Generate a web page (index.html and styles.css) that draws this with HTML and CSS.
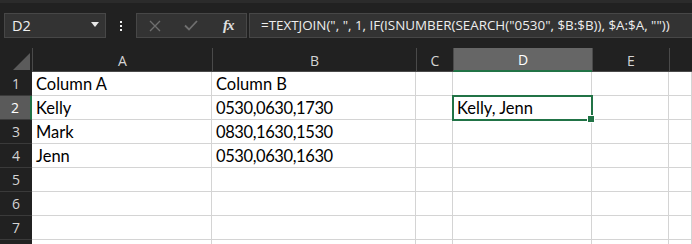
FILE: index.html
```html
<!DOCTYPE html>
<html>
<head>
<meta charset="utf-8">
<link rel="stylesheet" href="styles.css">
</head>
<body>
<div class="app">
  <div class="topstrip"></div>
  <div class="toolbar">
    <div class="namebox">
      <span class="nb-text">D2</span>
      <svg class="nb-caret" width="8" height="5" viewBox="0 0 8 5"><path d="M0 0H8L4 5Z" fill="#e8e8e8"/></svg>
    </div>
    <div class="dots"><i></i><i></i><i></i></div>
    <div class="btnbox">
      <svg class="ic ic-x" width="12" height="12" viewBox="0 0 12 12"><path d="M1 1L11 11M11 1L1 11" stroke="#6f6f6f" stroke-width="1.4"/></svg>
      <svg class="ic ic-check" width="14" height="11" viewBox="0 0 14 11"><path d="M1 5.5L5 9.5L13 1" stroke="#6f6f6f" stroke-width="1.8" fill="none"/></svg>
      <span class="fx">fx</span>
    </div>
    <div class="formula">=TEXTJOIN(", ", 1, IF(ISNUMBER(SEARCH("0530", $B:$B)), $A:$A, ""))</div>
  </div>
  <div class="sheet">
    <div class="hdr corner"><svg width="17" height="17" viewBox="0 0 17 17"><path d="M17 0V17H0Z" fill="#5b5b5b"/></svg></div>
    <div class="hdr col">A</div>
    <div class="hdr col">B</div>
    <div class="hdr col">C</div>
    <div class="hdr col sel">D</div>
    <div class="hdr col">E</div>
    <div class="hdr col last"></div>

    <div class="hdr row">1</div>
    <div class="cell">Column A</div><div class="cell">Column B</div><div class="cell"></div><div class="cell"></div><div class="cell"></div><div class="cell"></div>

    <div class="hdr row rsel">2</div>
    <div class="cell">Kelly</div><div class="cell num">0530,0630,1730</div><div class="cell"></div><div class="cell active">Kelly, Jenn<span class="handle"></span></div><div class="cell"></div><div class="cell"></div>

    <div class="hdr row">3</div>
    <div class="cell">Mark</div><div class="cell num">0830,1630,1530</div><div class="cell"></div><div class="cell"></div><div class="cell"></div><div class="cell"></div>

    <div class="hdr row">4</div>
    <div class="cell">Jenn</div><div class="cell num">0530,0630,1630</div><div class="cell"></div><div class="cell"></div><div class="cell"></div><div class="cell"></div>

    <div class="hdr row">5</div>
    <div class="cell"></div><div class="cell"></div><div class="cell"></div><div class="cell"></div><div class="cell"></div><div class="cell"></div>

    <div class="hdr row">6</div>
    <div class="cell"></div><div class="cell"></div><div class="cell"></div><div class="cell"></div><div class="cell"></div><div class="cell"></div>

    <div class="hdr row">7</div>
    <div class="cell"></div><div class="cell"></div><div class="cell"></div><div class="cell"></div><div class="cell"></div><div class="cell"></div>

    <div class="hdr row"></div>
    <div class="cell"></div><div class="cell"></div><div class="cell"></div><div class="cell"></div><div class="cell"></div><div class="cell"></div>
  </div>
</div>
</body>
</html>
```
FILE: styles.css
```css
* { box-sizing: border-box; }
html, body { margin: 0; padding: 0; }
body { background: #ffffff; width: 692px; height: 244px; overflow: hidden; }
.app { width: 692px; height: 244px; background: #212121; overflow: hidden; }
.topstrip { height: 3px; background: #2b2b2b; }
.toolbar {
  height: 45px;
  display: flex;
  align-items: flex-start;
  padding: 10px 0 0 4px;
  font-family: "Open Sans", "Noto Sans", sans-serif;
}
.namebox {
  width: 102px; height: 25px;
  background: #333333; border: 1px solid #474747;
  display: flex; align-items: center; justify-content: space-between;
  padding: 0 6px 0 7px;
}
.nb-text { color: #f0f0f0; font-size: 14.5px; }
.nb-caret { margin-top: -2px; }
.dots { width: 30px; height: 25px; display: flex; flex-direction: column; align-items: center; justify-content: center; gap: 2px; }
.dots i { display: block; width: 2px; height: 2px; background: #f0f0f0; }
.btnbox {
  width: 111px; height: 25px;
  background: #333333; border: 1px solid #474747;
  display: flex; align-items: center;
  padding-left: 12px;
}
.ic-x { margin-right: 23px; }
.ic-check { margin-right: 25px; }
.fx { color: #e0e0e0; font-family: "Liberation Serif", serif; font-style: italic; font-size: 15px; font-weight: bold; letter-spacing: -1px; }
.formula {
  margin-left: 2px;
  flex: 1; height: 25px;
  background: #333333; border: 1px solid #474747; border-right: none;
  color: #eeeeee; font-size: 13.4px; line-height: 23px;
  padding-left: 11px; white-space: nowrap;
}
.sheet {
  display: grid;
  grid-template-columns: 32px 180px 204px 37px 139px 77px 23px;
  grid-template-rows: repeat(9, 24px);
  font-family: "Lato", "Liberation Sans", sans-serif;
}
.hdr {
  background: #212121; color: #d4d4d4;
  font-family: "Open Sans", "Noto Sans", sans-serif; font-size: 14px;
  display: flex; align-items: center; justify-content: center;
}
.corner { align-items: flex-end; justify-content: flex-end; padding: 0 2px 2px 0; }
.col { border-left: 1px solid #4a4a4a; border-bottom: 1px solid #4a4a4a; padding-top: 1px; }
.col.sel { background: #666666; color: #ffffff; border-bottom: 2px solid #217346; }
.row { border-bottom: 1px solid #3a3a3a; }
.row.rsel { background: #5a5a5a; color: #ffffff; border-right: 2px solid #217346; }
.cell {
  background: #ffffff;
  border-right: 1px solid #d4d4d4; border-bottom: 1px solid #d4d4d4;
  color: #000000; font-size: 16.5px;
  display: flex; align-items: flex-end; padding: 0 0 1px 4px;
  white-space: nowrap; position: relative;
}
.cell.num { letter-spacing: -0.4px; }
.cell.active { outline: 2px solid #217346; outline-offset: -1px; z-index: 1; }
.handle { position: absolute; right: -4px; bottom: -4px; width: 6px; height: 6px; background: #217346; border: 1px solid #ffffff; box-sizing: content-box; }
```
